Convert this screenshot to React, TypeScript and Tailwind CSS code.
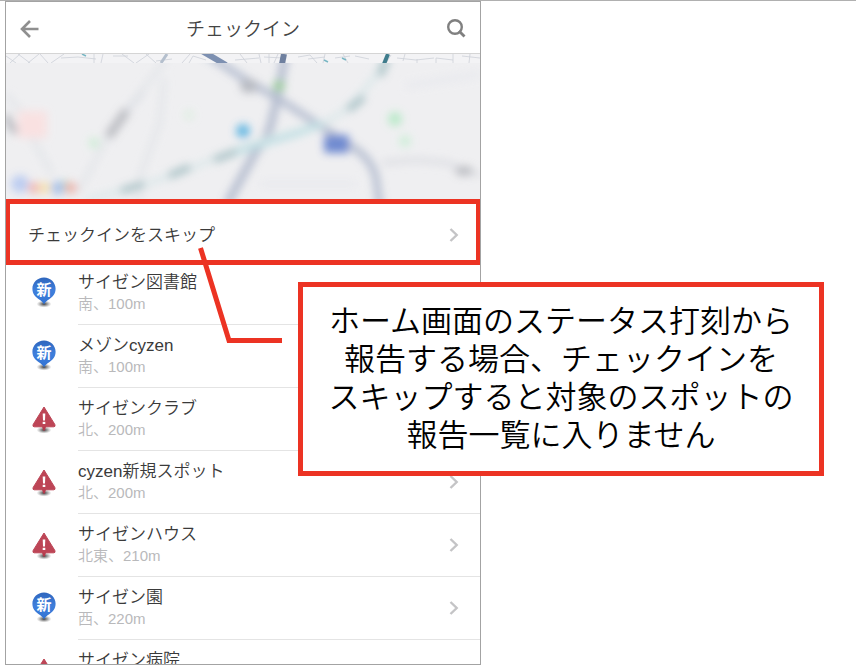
type Spot = { name: string; detail?: string; kind: "new" | "alert" };

const spots: Spot[] = [
  { name: "サイゼン図書館", detail: "南、100m", kind: "new" },
  { name: "メゾンcyzen", detail: "南、100m", kind: "new" },
  { name: "サイゼンクラブ", detail: "北、200m", kind: "alert" },
  { name: "cyzen新規スポット", detail: "北、200m", kind: "alert" },
  { name: "サイゼンハウス", detail: "北東、210m", kind: "alert" },
  { name: "サイゼン園", detail: "西、220m", kind: "new" },
  { name: "サイゼン病院", kind: "alert" },
];

function Chevron() {
  return (
    <svg width="10" height="14" viewBox="0 0 10 14" fill="none" stroke="#c4c4c6" strokeWidth="2.4" aria-hidden="true">
      <path d="M1.5 1 L7.7 7 L1.5 13" />
    </svg>
  );
}

function NewPin() {
  return (
    <svg width="28" height="32" viewBox="0 0 28 32" aria-hidden="true">
      <defs>
        <linearGradient id="pinFill" x1="0" y1="0" x2="0" y2="1">
          <stop offset="0" stopColor="#2f66bd" />
          <stop offset="0.5" stopColor="#3f7fdc" />
          <stop offset="1" stopColor="#3272d2" />
        </linearGradient>
        <radialGradient id="pinShade">
          <stop offset="0" stopColor="#222" stopOpacity="0.9" />
          <stop offset="0.5" stopColor="#555" stopOpacity="0.5" />
          <stop offset="1" stopColor="#888" stopOpacity="0" />
        </radialGradient>
      </defs>
      <ellipse cx="14" cy="28" rx="7.5" ry="3.6" fill="url(#pinShade)" />
      <path
        d="M14 1.5 C7.4 1.5 2.4 6.5 2.4 12.8 C2.4 18 5.4 21 8.8 23.2 C11 24.6 12.8 26 14 28.4 C15.2 26 17 24.6 19.2 23.2 C22.6 21 25.6 18 25.6 12.8 C25.6 6.5 20.6 1.5 14 1.5 Z"
        fill="url(#pinFill)"
      />
      <text x="14" y="18.5" textAnchor="middle" fontSize="15" fontWeight="700" fill="#fff">
        新
      </text>
    </svg>
  );
}

function AlertPin() {
  return (
    <svg width="28" height="32" viewBox="0 0 28 32" aria-hidden="true">
      <ellipse cx="14" cy="28" rx="7.5" ry="3.6" fill="url(#pinShade)" />
      <path d="M11.8 24 H16.2 L14.8 28.4 H13.2 Z" fill="#b43a4c" />
      <path d="M14 5 L24.8 22.4 Q25.8 24.8 23.6 24.8 H4.4 Q2.2 24.8 3.2 22.4 Z" fill="#bd4556" stroke="#bd4556" strokeLinejoin="round" />
      <path d="M12.7 11.5 H15.3 L15 18.6 H13 Z" fill="#fff" />
      <rect x="12.7" y="19.8" width="2.6" height="2.2" fill="#fff" />
    </svg>
  );
}

function StreetMap() {
  return (
    <svg className="block h-[150px] w-full" viewBox="0 0 474 150" preserveAspectRatio="xMidYMid slice" role="img" aria-label="地図">
      <defs>
        <filter id="soft" x="-10%" y="-10%" width="120%" height="120%">
          <feGaussianBlur stdDeviation="4" />
        </filter>
        <clipPath id="lower">
          <rect x="0" y="9" width="474" height="141" />
        </clipPath>
      </defs>
      <rect width="474" height="150" fill="#f3f3f5" />
      <g fill="none" stroke="#cdd1d8" strokeWidth="0.8">
        <path d="M0 2 L10 9 M4 9 L14 0 M12 0 L24 9 M22 9 L33 0 M34 0 L42 9 M45 9 L58 0 M55 4 L72 3 L90 5 M88 0 V9 M97 0 L95 9 M107 2 H122 M116 0 L128 9 M130 9 L143 0 M140 0 L150 9 M150 7 L166 5 M176 9 L184 0 M183 9 L187 2 L200 6 M234 0 L241 9 M229 6 L253 4 M253 0 L255 9 M258 3 L277 4 M263 0 V9 M268 9 L272 0 M292 3 L304 1 L311 9 M302 5 L319 3 M319 0 L317 9 M329 4 L344 2 M337 0 L342 9 M349 2 L363 5 M380 9 L385 1 M391 4 L410 6 L428 4 M399 0 L397 7 M411 5 V9 M430 9 V4 L447 6 M447 0 V9 M456 2 L474 4 M464 0 L463 9" />
      </g>
      <path d="M155 9 L161 0" stroke="#b4bfcd" strokeWidth="3" />
      <path d="M196 -3 L220 11" stroke="#7d90b1" strokeWidth="6" />
      <path d="M278 0 L276 10" stroke="#6f809f" strokeWidth="6" />
      <path d="M382 0 L378 10" stroke="#3f7c8c" strokeWidth="4" />
      <path d="M76 0 L80 2 M318 6 L322 8 M336 4 L340 6" stroke="#79b7c4" strokeWidth="1.5" />
      <g clipPath="url(#lower)">
        <rect y="9" width="474" height="141" fill="#efeff1" />
        <g filter="url(#soft)" fill="none" opacity="0.85">
          <path d="M161 4 L132 42 L116 62 L98 90 L72 138 M158 24 L154 68 L135 120 L132 150 M24 80 L46 120 M0 40 L25 70" stroke="#e0e3e7" strokeWidth="5" />
          <path d="M0 61 Q4 74 11 78" stroke="#b4b5bb" strokeWidth="8" />
          <path d="M102 83 L121 56" stroke="#b2b4ba" strokeWidth="9" />
          <path d="M121 57 L137 38" stroke="#d8dce2" strokeWidth="5" />
          <rect x="12" y="57" width="29" height="27" rx="3" fill="#fbdfdf" />
          <circle cx="88" cy="89" r="5" fill="#c4ecce" />
          <circle cx="183" cy="61" r="5" fill="#dceedf" />
          <path d="M192 -6 L235 23 L276 47 L316 73 L348 94 Q366 106 370 124 L374 154" stroke="#abb5ca" strokeWidth="7" />
          <path d="M280 -4 L273 36 L265 70 Q262 84 250 97 L221 150" stroke="#aab4c9" strokeWidth="8" />
          <path d="M80 146 L135 132 L186 114 L236 93 L278 80 L316 70 L334 60 L352 44 L371 20 L382 0" stroke="#d6e6e8" strokeWidth="5" />
          <path d="M115 137 L138 130 M163 122 L184 113 M208 106 L232 97 M342 56 L358 43 M374 22 L381 4" stroke="#9fbbc0" strokeWidth="7" />
          <path d="M230 98 L290 80 L316 70" stroke="#b5dce1" strokeWidth="6" />
          <ellipse cx="243" cy="32" rx="9" ry="7" fill="#adb1b9" />
          <circle cx="273" cy="32" r="6" fill="#8cc48c" />
          <circle cx="237" cy="77" r="7" fill="#4eaee0" />
          <rect x="318" y="81" width="25" height="18" rx="2" fill="#5a79cb" />
          <circle cx="389" cy="65" r="7" fill="#b0e9c2" />
          <circle cx="399" cy="87" r="6" fill="#c9efd5" />
          <path d="M376 109 L410 106 L442 109 L458 117 L474 121" stroke="#dcdde2" strokeWidth="6" />
          <ellipse cx="458" cy="117" rx="9" ry="5" fill="#b3b5bb" />
          <path d="M254 130 H350 M400 32 L474 20" stroke="#e8e9ee" strokeWidth="7" />
          <circle cx="14" cy="130" r="9" fill="#b4c7f1" />
          <circle cx="28" cy="134" r="6" fill="#f2b0a8" />
          <circle cx="39" cy="134" r="6" fill="#f7e0a5" />
          <circle cx="52" cy="134" r="7" fill="#9dbaea" />
          <path d="M59 126 V138" stroke="#a5d5b8" strokeWidth="4" />
          <circle cx="65" cy="134" r="6" fill="#eeaaa0" />
        </g>
      </g>
    </svg>
  );
}

export default function App() {
  return (
    <div
      lang="ja"
      className="relative flex h-screen flex-col items-start overflow-hidden border-t border-[#b0b0b0] bg-white pb-[5px] pl-[5px] font-['Liberation_Sans','Noto_Sans_CJK_JP',sans-serif] text-[#3a3a3a]"
    >
      <main className="flex min-h-0 w-full max-w-[476px] flex-1 flex-col overflow-hidden border border-[#a3a3a3] bg-white">
        <header className="flex h-13 shrink-0 items-center justify-between border-b border-[#d5d5d5] px-3">
          <button type="button" aria-label="戻る" className="flex size-6 items-center justify-center">
            <svg width="20" height="20" viewBox="0 0 20 20" fill="none" stroke="#8f8f8f" strokeWidth="2.6">
              <path d="M18.5 11 H2.5 M10 3 L2 11 L10 19" />
            </svg>
          </button>
          <h1 className="pt-1 text-[19px] leading-6 font-[350] text-[#444]">チェックイン</h1>
          <button type="button" aria-label="検索" className="flex size-6 items-center justify-center">
            <svg width="20" height="20" viewBox="0 0 20 20" fill="none" stroke="#808080" strokeWidth="2.4">
              <circle cx="9" cy="9" r="6.8" />
              <path d="M13 13 L18.5 18.5" strokeWidth="2.8" />
            </svg>
          </button>
        </header>

        <div className="shrink-0">
          <StreetMap />
        </div>

        <div className="relative shrink-0">
          <button type="button" className="flex h-[58px] w-full items-center justify-between pt-1 pr-[21px] pl-[22px] text-left">
            <span className="pt-[2px] text-[17px] leading-[22px] font-[350]">チェックインをスキップ</span>
            <Chevron />
          </button>
          <div className="pointer-events-none absolute -inset-x-px -top-[5px] -bottom-[3px] z-10 border-5 border-[#ec3323]" />
        </div>

        <ul>
          {spots.map((spot) => (
            <li key={spot.name}>
              <button type="button" className="flex h-[63px] w-full pl-6 text-left">
                <span className="w-12 shrink-0 pt-[14px]">{spot.kind === "new" ? <NewPin /> : <AlertPin />}</span>
                <span className="flex h-full flex-1 justify-between border-b border-[#e4e4e4] pr-[21px]">
                  <span className="pt-[10px]">
                    <span className="block text-[17px] leading-[22px] font-[350]">{spot.name}</span>
                    {spot.detail && (
                      <span className="block text-[15px] leading-5 font-[350] text-[#b9b9bb]">{spot.detail}</span>
                    )}
                  </span>
                  <span className="self-center">
                    <Chevron />
                  </span>
                </span>
              </button>
            </li>
          ))}
        </ul>
      </main>

      <svg className="pointer-events-none absolute top-[240px] left-[190px] z-20" width="100" height="110" viewBox="0 0 100 110" fill="none" aria-hidden="true">
        <path d="M10.5 7 L39 99.5 H92" stroke="#ec3323" strokeWidth="5" />
      </svg>
      <p className="absolute top-[281px] left-[298px] z-20 w-[526px] border-5 border-[#ec3323] bg-white py-4 text-center text-[31px] leading-[38px] font-[350] whitespace-nowrap text-black">
        ホーム画面のステータス打刻から
        <br />
        報告する場合、チェックインを
        <br />
        スキップすると対象のスポットの
        <br />
        報告一覧に入りません
      </p>
    </div>
  );
}
